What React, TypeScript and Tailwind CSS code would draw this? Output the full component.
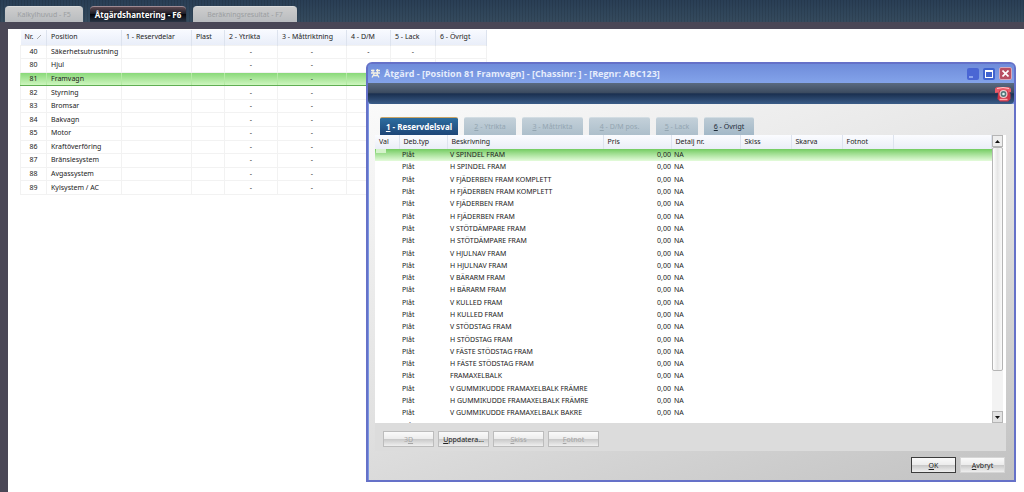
import { useState } from 'react';

const positions = [
  { nr: 40, name: 'Säkerhetsutrustning', dm: '-', paint: '-' },
  { nr: 80, name: 'Hjul' },
  { nr: 81, name: 'Framvagn' },
  { nr: 82, name: 'Styrning' },
  { nr: 83, name: 'Bromsar' },
  { nr: 84, name: 'Bakvagn' },
  { nr: 85, name: 'Motor' },
  { nr: 86, name: 'Kraftöverföring' },
  { nr: 87, name: 'Bränslesystem' },
  { nr: 88, name: 'Avgassystem' },
  { nr: 89, name: 'Kylsystem / AC' },
];

const parts = [
  'V SPINDEL FRAM',
  'H SPINDEL FRAM',
  'V FJÄDERBEN FRAM KOMPLETT',
  'H FJÄDERBEN FRAM KOMPLETT',
  'V FJÄDERBEN FRAM',
  'H FJÄDERBEN FRAM',
  'V STÖTDÄMPARE FRAM',
  'H STÖTDÄMPARE FRAM',
  'V HJULNAV FRAM',
  'H HJULNAV FRAM',
  'V BÄRARM FRAM',
  'H BÄRARM FRAM',
  'V KULLED FRAM',
  'H KULLED FRAM',
  'V STÖDSTAG FRAM',
  'H STÖDSTAG FRAM',
  'V FÄSTE STÖDSTAG FRAM',
  'H FÄSTE STÖDSTAG FRAM',
  'FRAMAXELBALK',
  'V GUMMIKUDDE FRAMAXELBALK FRÄMRE',
  'H GUMMIKUDDE FRAMAXELBALK FRÄMRE',
  'V GUMMIKUDDE FRAMAXELBALK BAKRE',
];

const mainTabs = [
  { label: 'Kalkylhuvud - F5', width: 'w-[78px]' },
  { label: 'Åtgärdshantering - F6', width: 'w-24', active: true },
  { label: 'Beräkningsresultat - F7', width: 'w-[104px]' },
];

const dialogTabs = [
  { hot: '1', label: ' - Reservdelsval', width: 'w-[78px]', state: 'active' },
  { hot: '2', label: ' - Ytrikta', width: 'w-[52px]', state: 'disabled' },
  { hot: '3', label: ' - Måttrikta', width: 'w-[61px]', state: 'disabled' },
  { hot: '4', label: ' - D/M pos.', width: 'w-[61px]', state: 'disabled' },
  { hot: '5', label: ' - Lack', width: 'w-[42px]', state: 'disabled' },
  { hot: '6', label: ' - Övrigt', width: 'w-[50px]', state: 'normal' },
];

const tabStyles: Record<string, string> = {
  active: 'bg-linear-to-b from-[#2d6d9f] to-[#1d4678] border-t-[#c9a566] text-[8px] text-white font-bold',
  disabled: 'bg-linear-to-b from-[#c3d0d9] to-[#adbfcb] border-t-[#d3dde3] text-[#93a5b1]',
  normal: 'bg-linear-to-b from-[#bccbd5] to-[#a3b8c7] border-t-[#d3dde3] text-[#1c2a36]',
};

const headCell = 'p-0 pl-1 text-left font-normal whitespace-nowrap border-r border-[#dde3ee]';
const buttonFace = 'h-4 border bg-[linear-gradient(#fafafa,#ececec_50%,#c9c9c9_52%,#efefef)] leading-none';

function Hot({ hot, children }: { hot: string; children?: React.ReactNode }) {
  return (
    <>
      <span className="underline">{hot}</span>
      {children}
    </>
  );
}

function PhoneIcon() {
  return (
    <svg className="h-4 w-[18px]" viewBox="0 0 18 16" aria-hidden="true">
      <path d="M4 7 5 4h9l2.5 4v5L14 15.5H6L3.5 13z" fill="#cf3547" />
      <path d="M1 3.5Q1 1 4 1h9q4 0 4 2.5V6l-3 .5v-2H5v2L1 7z" fill="#ec5a68" />
      <path d="M3 2.5q6-2 12 0" fill="none" stroke="#ffc9ca" />
      <circle cx="9.5" cy="8" r="4" fill="#f3d0d2" />
      <circle cx="9.5" cy="8" r="2.9" fill="#55787c" />
      <circle cx="9.5" cy="8" r="1.3" fill="#dff5f2" />
      <path d="M5.5 13.5h8" stroke="#ffa9ad" strokeWidth="1.5" />
    </svg>
  );
}

function AppIcon() {
  return (
    <svg className="h-[9px] w-[9px]" viewBox="0 0 9 9" aria-hidden="true">
      <path d="M0 1.5h3.5M5 1.5h4M0 4h9M2 .5v3M6.5 0v4M3.5 4 1 8.500M5.5 4 8 8.5M2.500 6.5h4" fill="none" stroke="#f3f1e4" strokeWidth="1.3" />
    </svg>
  );
}

function PositionTable({ selected, onSelect }: { selected: number; onSelect: (nr: number) => void }) {
  return (
    <table className="h-[165px] w-[466px] table-fixed border-collapse">
      <colgroup>
        <col className="w-[26px]" />
        <col className="w-[75px]" />
        <col className="w-[70px]" />
        <col className="w-[33px]" />
        <col className="w-[53px]" />
        <col className="w-[69px]" />
        <col className="w-11" />
        <col className="w-[45px]" />
        <col className="w-[51px]" />
      </colgroup>
      <thead>
        <tr className="h-[15px] bg-linear-to-b from-[#f8faff] to-[#e9eef9]">
          <th className={headCell}>
            Nr.
            <svg className="ml-1 inline h-1 w-1" viewBox="0 0 4 4" aria-hidden="true"><path d="M0 4 4 0" stroke="#a9a9a9" /></svg>
          </th>
          <th className={headCell}>Position</th>
          <th className={headCell}>1 - Reservdelar</th>
          <th className={headCell}>Plast</th>
          <th className={headCell}>2 - Ytrikta</th>
          <th className={headCell}>3 - Måttriktning</th>
          <th className={headCell}>4 - D/M</th>
          <th className={headCell}>5 - Lack</th>
          <th className={headCell}>6 - Övrigt</th>
        </tr>
      </thead>
      <tbody>
        {positions.map((p) => (
          <tr
            key={p.nr}
            onClick={() => onSelect(p.nr)}
            className={`*:border *:p-0 ${p.nr === selected ? 'bg-linear-to-b from-[#83d673] to-[#d3f8c4] *:border-x-[#b4eaa4] *:border-y-[#5fae52]' : '*:border-[#f2f2f2]'}`}
          >
            <td className="text-center">{p.nr}</td>
            <td className="whitespace-nowrap"><span className="pl-1">{p.name}</span></td>
            <td />
            <td />
            <td className="text-center">-</td>
            <td className="text-center">-</td>
            <td className="text-center">{p.dm}</td>
            <td className="text-center">{p.paint}</td>
            <td />
          </tr>
        ))}
      </tbody>
    </table>
  );
}

function PartsTable() {
  const [selected, setSelected] = useState(0);

  return (
    <div className="flex h-72 bg-white">
      <div className="min-w-0 flex-1 overflow-hidden">
        <table className="h-[297px] w-full table-fixed border-collapse">
          <colgroup>
            <col className="w-6" />
            <col className="w-12" />
            <col className="w-[156px]" />
            <col className="w-[68px]" />
            <col className="w-[69px]" />
            <col className="w-[51px]" />
            <col className="w-[51px]" />
            <col className="w-[51px]" />
            <col />
          </colgroup>
          <thead>
            <tr className="h-[14px] bg-linear-to-b from-[#fbfcff] to-[#eaeef7]">
              {['Val', 'Deb.typ', 'Beskrivning', 'Pris', 'Detalj nr.', 'Skiss', 'Skarva', 'Fotnot', ''].map((h) => (
                <th key={h} className={headCell}>{h}</th>
              ))}
            </tr>
          </thead>
          <tbody>
            {parts.map((name, i) => (
              <tr
                key={name}
                onClick={() => setSelected(i)}
                className={`*:p-0 ${i === selected ? 'bg-linear-to-b from-[#73cc60] to-[#e4fbdb]' : ''}`}
              >
                <td className="align-top">
                  {i === selected && <div className="ml-px h-1 w-[10px] bg-[#d5f3cb]" />}
                </td>
                <td><span className="pl-[3px]">Plåt</span></td>
                <td className="whitespace-nowrap"><span className="pl-[3px]">{name}</span></td>
                <td className="text-right">0,00</td>
                <td><span className="pl-[3px]">NA</span></td>
                <td />
                <td />
                <td />
                <td />
              </tr>
            ))}
            <tr className="*:p-0">
              <td />
              <td><span className="pl-[3px]">Plåt</span></td>
              <td colSpan={7} />
            </tr>
          </tbody>
        </table>
      </div>
      <div className="mr-[3px] flex w-[11px] flex-col bg-[#f3f3f3]">
        <button aria-label="Rulla upp" className="flex h-3 items-center justify-center border border-[#b5b5b5] bg-[#eeeeee]">
          <svg className="h-[3px] w-[5px]" viewBox="0 0 5 3"><path d="M0 3 2.5 0 5 3z" fill="#111" /></svg>
        </button>
        <div className="h-56 rounded-xs border border-[#b5b5b5] bg-linear-to-r from-white via-[#e6e6e6] to-[#fafafa]" />
        <div className="flex-1" />
        <button aria-label="Rulla ned" className="flex h-3 items-center justify-center border border-[#b5b5b5] bg-[#e2e2e2]">
          <svg className="h-[3px] w-[5px]" viewBox="0 0 5 3"><path d="M0 0 2.5 3 5 0z" fill="#111" /></svg>
        </button>
      </div>
    </div>
  );
}

function ActionDialog() {
  return (
    <div
      role="dialog"
      aria-label="Åtgärd"
      className="absolute top-[62px] right-2 left-[366px] flex flex-col rounded-t-md border-2 border-[#6571c8] bg-[#7b97e2]"
    >
      {/* Title bar */}
      <div className="flex h-[19px] items-center gap-1 rounded-t-sm bg-linear-to-b from-[#6f8cda] to-[#83a3ea] pr-[2px] pl-[3px]">
        <AppIcon />
        <h1 className="flex-1 font-['Open_Sans',sans-serif] text-[9px] leading-3 font-bold whitespace-nowrap text-[#e6edfc]">
          Åtgärd - [Position 81 Framvagn] - [Chassinr: ] - [Regnr: ABC123]
        </h1>
        <button aria-label="Minimera" className="flex h-3 w-3 items-end rounded-xs bg-[#4a66d4] p-[2px]">
          <span className="h-[2px] w-1 bg-[#8ba3ee]" />
        </button>
        <button aria-label="Maximera" className="flex h-3 w-3 items-center justify-center rounded-xs bg-[#3f63cf]">
          <span className="h-2 w-2 border border-t-2 border-white" />
        </button>
        <button aria-label="Stäng" className="flex h-[13px] w-[13px] items-center justify-center rounded-xs border border-[#d6a8bb] bg-[#b84f63]">
          <svg className="h-[7px] w-[7px]" viewBox="0 0 7 7"><path d="M0.5 0.5 6.5 6.5M6.5 0.5 0.5 6.5" stroke="#fff" strokeWidth="1.6" /></svg>
        </button>
      </div>

      <div className="flex h-[21px] items-center justify-end rounded-b-sm bg-[linear-gradient(#5a6a80,#3d4c61_45%,#1b3050_52%,#3a5c88)] pr-[2px]">
        <PhoneIcon />
      </div>

      <div className="ml-px bg-[linear-gradient(160deg,#fafafa,#e2e2e2_50%,#c2c2c2)] pt-[13px] pr-2 pb-[7px] pl-[6px]">
        {/* Tabs */}
        <div className="flex gap-[6px] pl-[5px]" role="tablist">
          {dialogTabs.map((t) => (
            <button
              key={t.hot}
              role="tab"
              aria-selected={t.state === 'active'}
              disabled={t.state === 'disabled'}
              className={`h-[18px] rounded-t-xs border-t leading-none whitespace-nowrap ${t.width} ${tabStyles[t.state]}`}
            >
              <Hot hot={t.hot}>{t.label}</Hot>
            </button>
          ))}
        </div>

        <div className="bg-[#dcdcdc]">
          <PartsTable />
          <div className="flex gap-1 px-2 pt-2 pb-1">
            <button disabled className={`w-[51px] border-[#bcbcbc] text-[#a5a5a5] ${buttonFace}`}>3<Hot hot="D" /></button>
            <button className={`w-[51px] border-[#bcbcbc] ${buttonFace}`}><Hot hot="U">ppdatera...</Hot></button>
            <button disabled className={`w-[51px] border-[#bcbcbc] text-[#a5a5a5] ${buttonFace}`}><Hot hot="S">kiss</Hot></button>
            <button disabled className={`w-[51px] border-[#bcbcbc] text-[#a5a5a5] ${buttonFace}`}><Hot hot="F">otnot</Hot></button>
          </div>
        </div>

        <div className="flex justify-end gap-1 pt-[6px] pr-px">
          <button className={`w-[45px] border-[#3c3c3c] ${buttonFace}`}><Hot hot="O">K</Hot></button>
          <button className={`w-[45px] border-[#d6d6d6] ${buttonFace}`}><Hot hot="A">vbryt</Hot></button>
        </div>
      </div>
    </div>
  );
}

export default function App() {
  const [selected, setSelected] = useState(81);

  return (
    <div className="relative flex min-h-screen flex-col bg-[#4a4756] font-['Noto_Sans',sans-serif] text-[7px] leading-[10px] text-[#222222]">
      {/* Main tabs */}
      <nav className="flex h-[22px] items-end gap-[7px] bg-[#30455a] bg-[repeating-linear-gradient(90deg,#00000018_0_1px,transparent_1px_3px),linear-gradient(#293e55,#354b5e)] pl-[5px]">
        {mainTabs.map((t) => (
          <button
            key={t.label}
            disabled={!t.active}
            className={`h-4 rounded-t-sm border-t leading-none whitespace-nowrap ${t.width} ${t.active ? 'border-[#a08c94] bg-[linear-gradient(#5c4850,#1c1c26_45%,#05050c_50%,#2a3545)] text-[8px] font-bold text-white' : 'border-[#dcdcdc] bg-linear-to-b from-[#cdcdcd] to-[#b9bcbf] text-[#9b9ea1]'}`}
          >
            {t.label}
          </button>
        ))}
      </nav>

      <main className="mt-[7px] ml-2 flex-1 bg-white pl-3">
        <div className="pt-px">
          <PositionTable selected={selected} onSelect={setSelected} />
        </div>
      </main>

      <ActionDialog />
    </div>
  );
}
